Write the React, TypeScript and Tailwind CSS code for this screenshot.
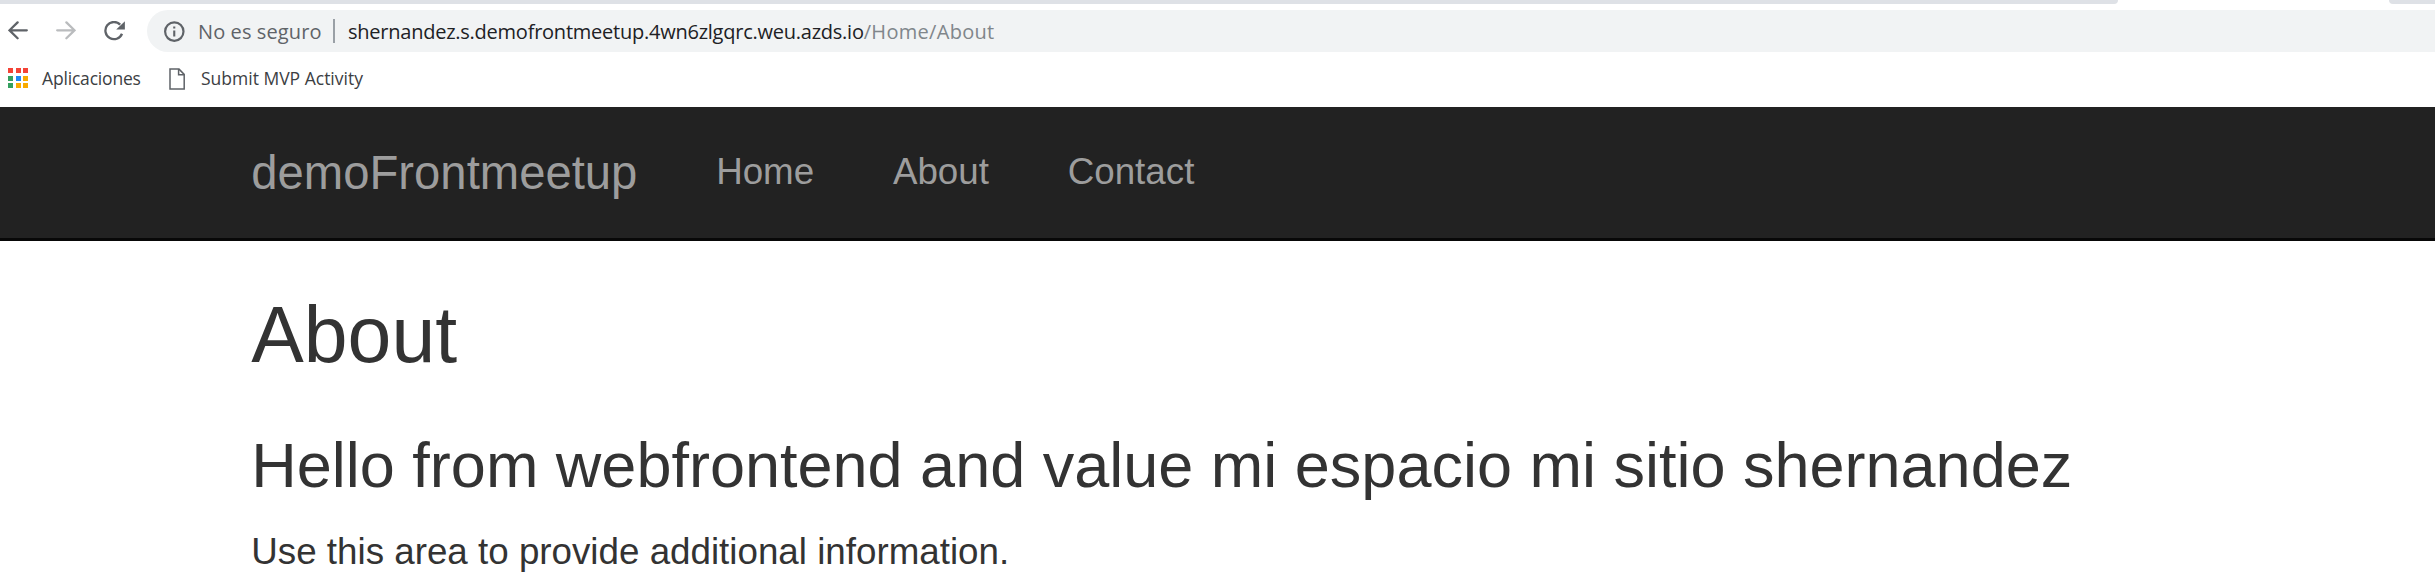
import React from "react";

function BackIcon({ color, flip }: { color: string; flip?: boolean }) {
  return (
    <svg width="20" height="20" viewBox="0 0 20 20" fill="none" stroke={color} strokeWidth="2.3" strokeLinecap="round" className={flip ? "-scale-x-100" : ""}>
      <path d="M18.8 9.3H1.8M9.6 1.4L1.5 9.3l8.1 8" />
    </svg>
  );
}

function ReloadIcon() {
  return (
    <svg width="22" height="20" viewBox="0 0 22 20" fill="none">
      <path d="M18 12.8A8.6 8.6 0 1 1 16.2 3.6" stroke="#5f6368" strokeWidth="2.3" />
      <path d="M20.9 .3V8.6H12.2z" fill="#5f6368" />
    </svg>
  );
}

function InfoIcon() {
  return (
    <svg width="21" height="21" viewBox="0 0 21 21" fill="none">
      <circle cx="10.3" cy="10.6" r="9.2" stroke="#5f6368" strokeWidth="2.2" />
      <path d="M9.2 9.4h2.1v6H9.2zM9.2 5.5h2.1v2.1H9.2z" fill="#5f6368" />
    </svg>
  );
}

function PageIcon() {
  return (
    <svg width="17" height="22" viewBox="0 0 17 22" fill="none" stroke="#5f6368" strokeWidth="1.5">
      <path d="M1 1.1h9l5.2 5.3v14.5H1z" />
      <path d="M9.6 1v5.8h5.6" />
    </svg>
  );
}

const appColors = [
  "bg-[#f44336]", "bg-[#f44336]", "bg-[#f44336]",
  "bg-[#34a05f]", "bg-[#1e88f5]", "bg-[#f9ab00]",
  "bg-[#34a05f]", "bg-[#f9ab00]", "bg-[#f9ab00]",
];

function Toolbar() {
  return (
    <header className="flex h-[107px] flex-col font-['Open_Sans',sans-serif] whitespace-nowrap">
      <div className="flex h-1 justify-between">
        <div className="w-[2118px] rounded-br-[10px] bg-[#dee1e6]" />
        <div className="w-[46px] rounded-bl-[10px] bg-[#dee1e6]" />
      </div>
      <div className="mt-1.5 flex h-[42px] items-center">
        <div className="ml-2 w-12"><BackIcon color="#5f6368" /></div>
        <div className="w-12"><BackIcon color="#babcbe" flip /></div>
        <div className="w-[43px]"><ReloadIcon /></div>
        <div className="flex h-full flex-1 items-center rounded-l-full bg-[#f1f3f4] pl-[17px] text-[20px]">
          <InfoIcon />
          <span className="ml-[13px] w-[135px] pt-px tracking-[0.1px] text-[#5f6368]">No es seguro</span>
          <span className="h-6 w-0.5 bg-[#9aa0a6]" />
          <span className="ml-[13px] pt-px tracking-[-0.24px] text-[#202124]">shernandez.s.demofrontmeetup.4wn6zlgqrc.weu.azds.io</span>
          <span className="pt-px tracking-[0.3px] text-[#80868b]">/Home/About</span>
        </div>
      </div>
      <nav className="mt-[10px] flex h-8 items-center pl-2 text-[17.5px] text-[#3c4043]">
        <div className="grid grid-cols-3 gap-[2.5px]">
          {appColors.map((c, i) => <span key={i} className={`size-[5px] ${c}`} />)}
        </div>
        <span className="ml-[14px] w-[127px] pt-px tracking-[-0.18px]">Aplicaciones</span>
        <span className="pt-0.5"><PageIcon /></span>
        <span className="ml-[15px] pt-px">Submit MVP Activity</span>
      </nav>
    </header>
  );
}

export default function App() {
  return (
    <div className="h-[576px] w-[2435px] overflow-hidden bg-white font-['Liberation_Sans',Arial,sans-serif] text-[#333]">
      <Toolbar />
      <nav className="flex h-[134px] items-start border-b-[3px] border-[#080808] bg-[#222] pt-[39.4px] pl-[251.3px] leading-[52.5px] whitespace-nowrap text-[#9d9d9d]">
        <a className="pt-px text-[47.25px]">demoFrontmeetup</a>
        <a className="ml-[78.75px] text-[36.75px]">Home</a>
        <a className="ml-[78.75px] text-[36.75px]">About</a>
        <a className="ml-[78.75px] text-[36.75px]">Contact</a>
      </nav>
      <main className="pt-[51px] pl-[251.3px] whitespace-nowrap">
        <h2 className="text-[78.75px] leading-[86.6px]">About</h2>
        <h3 className="mt-[52px] text-[63px] leading-[69.3px]">Hello from webfrontend and value mi espacio mi sitio shernandez</h3>
        <p className="mt-[26px] text-[36.75px] leading-[52.5px]">Use this area to provide additional information.</p>
      </main>
    </div>
  );
}
